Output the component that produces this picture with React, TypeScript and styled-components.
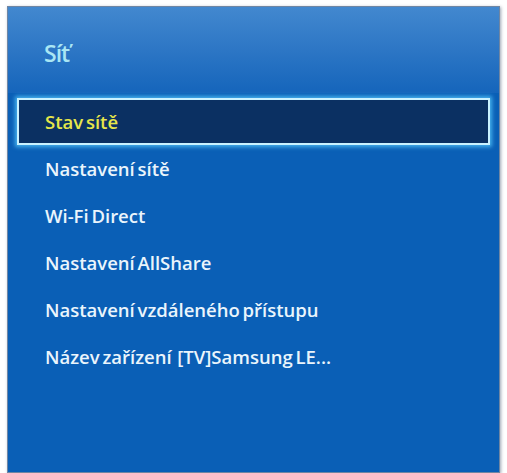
import styled, { createGlobalStyle } from "styled-components";

const GlobalStyle = createGlobalStyle`
  html, body {
    margin: 0;
    padding: 0;
    background: #ffffff;
  }
  body {
    font-family: "Open Sans", "Liberation Sans", sans-serif;
  }
`;

const items = [
  "Stav sítě",
  "Nastavení sítě",
  "Wi-Fi Direct",
  "Nastavení AllShare",
  "Nastavení vzdáleného přístupu",
  "Název zařízení  [TV]Samsung LE...",
];

function App() {
  const selected = 0;

  return (
    <>
      <GlobalStyle />
      <Page>
        <Panel>
          <Header>
            <Title>Síť</Title>
          </Header>
          <MenuList>
            {items.map((label, i) => (
              <MenuRow key={label} $active={i === selected}>
                <MenuText $active={i === selected}>{label}</MenuText>
              </MenuRow>
            ))}
          </MenuList>
        </Panel>
      </Page>
    </>
  );
}

export default App;

const Page = styled.div`
  width: 507px;
  height: 473px;
  padding: 6px 7px 0 7px;
  box-sizing: border-box;
  overflow: hidden;
`;

const Panel = styled.div`
  width: 493px;
  height: 467px;
  box-sizing: border-box;
  border: 1px solid #6f86a3;
  background: #0a5fb6;
  box-shadow: 1px 1px 3px rgba(40, 60, 90, 0.45);
  display: flex;
  flex-direction: column;
`;

const Header = styled.div`
  height: 86px;
  box-sizing: border-box;
  padding: 6px 0 0 36px;
  display: flex;
  align-items: center;
  background: linear-gradient(to bottom, #4288cf 0%, #2f78c6 45%, #1565bb 100%);
`;

const Title = styled.h1`
  margin: 0;
  font-size: 23px;
  font-weight: 600;
  letter-spacing: -1px;
  color: #a9e6f4;
`;

const MenuList = styled.ul`
  list-style: none;
  margin: 5px 0 0 9px;
  padding: 0;
  width: 473px;
`;

interface rowProps {
  $active: boolean;
}

const MenuRow = styled.li<rowProps>`
  height: 47px;
  box-sizing: border-box;
  display: flex;
  align-items: center;
  padding-left: 26px;
  background: ${({ $active }) => ($active ? "#0b3062" : "transparent")};
  border: 2px solid ${({ $active }) => ($active ? "#c9f2ff" : "transparent")};
  box-shadow: ${({ $active }) =>
    $active ? "0 0 4px 2px rgba(90, 205, 255, 0.75)" : "none"};
`;

const MenuText = styled.span<rowProps>`
  font-size: 18.5px;
  font-weight: 600;
  letter-spacing: 0;
  word-spacing: -2px;
  white-space: pre;
  color: ${({ $active }) => ($active ? "#e6e64a" : "#eaf5fc")};
`;
